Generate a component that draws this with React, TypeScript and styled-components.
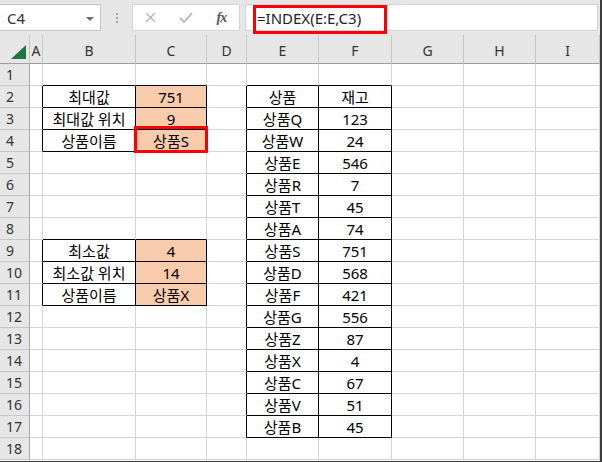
import styled, { createGlobalStyle } from "styled-components";

const GlobalStyle = createGlobalStyle`
  html, body { margin: 0; padding: 0; background: #fff; }
  body { font-family: "Noto Sans", "Noto Sans CJK KR", sans-serif; }
`;

type Range = { c1: number; c2: number; r1: number; r2: number };

const COLUMNS = ["A", "B", "C", "D", "E", "F", "G", "H", "I"];
const ROWS = 18;

const TABLES: Range[] = [
  { c1: 1, c2: 2, r1: 2, r2: 4 },
  { c1: 1, c2: 2, r1: 9, r2: 11 },
  { c1: 4, c2: 5, r1: 2, r2: 17 },
];

const stock: [string, string][] = [
  ["상품", "재고"],
  ["상품Q", "123"],
  ["상품W", "24"],
  ["상품E", "546"],
  ["상품R", "7"],
  ["상품T", "45"],
  ["상품A", "74"],
  ["상품S", "751"],
  ["상품D", "568"],
  ["상품F", "421"],
  ["상품G", "556"],
  ["상품Z", "87"],
  ["상품X", "4"],
  ["상품C", "67"],
  ["상품V", "51"],
  ["상품B", "45"],
];

const values: Record<string, string> = {
  "2-1": "최대값",
  "2-2": "751",
  "3-1": "최대값 위치",
  "3-2": "9",
  "4-1": "상품이름",
  "4-2": "상품S",
  "9-1": "최소값",
  "9-2": "4",
  "10-1": "최소값 위치",
  "10-2": "14",
  "11-1": "상품이름",
  "11-2": "상품X",
};
stock.forEach(([name, qty], i) => {
  values[`${i + 2}-4`] = name;
  values[`${i + 2}-5`] = qty;
});

const filled = (r: number, c: number) =>
  c === 2 && ((r >= 2 && r <= 4) || (r >= 9 && r <= 11));
const bottomDark = (r: number, c: number) =>
  TABLES.some((t) => c >= t.c1 && c <= t.c2 && r >= t.r1 - 1 && r <= t.r2);
const rightDark = (r: number, c: number) =>
  TABLES.some((t) => r >= t.r1 && r <= t.r2 && c >= t.c1 - 1 && c <= t.c2);

const Window = styled.div`
  width: 602px;
  height: 462px;
  box-sizing: border-box;
  overflow: hidden;
  border-right: 2px solid #3c3c3c;
  border-bottom: 1px solid #3c3c3c;
  background: #fff;
`;

const Toolbar = styled.div`
  height: 35px;
  box-sizing: border-box;
  padding-top: 4px;
  background: #e6e6e6;
  display: flex;
  align-items: flex-start;
`;

const NameBox = styled.div`
  width: 101px;
  height: 27px;
  box-sizing: border-box;
  background: #fff;
  border: 1px solid #c6c6c6;
  border-left: none;
  display: flex;
  align-items: center;
  justify-content: space-between;
  padding: 0 6px 0 7px;
  font-size: 15px;
  color: #333;
`;

const DropArrow = styled.span`
  width: 0;
  height: 0;
  border-left: 4px solid transparent;
  border-right: 4px solid transparent;
  border-top: 4px solid #6d6d6d;
  margin-top: 2px;
`;

const Grip = styled.div`
  width: 31px;
  height: 27px;
  display: flex;
  flex-direction: column;
  align-items: center;
  justify-content: center;
  gap: 2px;
`;

const Dot = styled.span`
  width: 2px;
  height: 2px;
  background: #a6a6a6;
`;

const FuncBox = styled.div`
  width: 108px;
  height: 27px;
  box-sizing: border-box;
  background: #fff;
  border: 1px solid #d4d4d4;
  display: flex;
  align-items: center;
`;

const FuncButton = styled.div`
  width: 36px;
  display: flex;
  justify-content: center;
  align-items: center;
`;

const Fx = styled.span`
  font-family: "Liberation Serif", "DejaVu Serif", serif;
  font-style: italic;
  font-weight: bold;
  font-size: 14px;
  color: #555;
  letter-spacing: -1px;
`;

const FormulaBox = styled.div`
  position: relative;
  width: 353px;
  height: 27px;
  margin-left: 5px;
  box-sizing: border-box;
  background: #fff;
  border: 1px solid #d4d4d4;
  display: flex;
  align-items: center;
  padding-left: 11px;
  font-size: 15px;
  color: #222;
`;

const Mark = styled.span<{ $top: number; $left: number; $w: number; $h: number }>`
  position: absolute;
  top: ${(p) => p.$top}px;
  left: ${(p) => p.$left}px;
  width: ${(p) => p.$w}px;
  height: ${(p) => p.$h}px;
  box-sizing: border-box;
  border: 3px solid #f00;
  pointer-events: none;
  z-index: 2;
`;

const Sheet = styled.div`
  display: grid;
  grid-template-columns: 30px 13px 93px 71px 40px 72px 73px 72px 72px 1fr;
  grid-auto-rows: 22px;
  grid-template-rows: 29px;
`;

const Corner = styled.div`
  background: #e6e6e6;
  border-right: 1px solid #c6c6c6;
  border-bottom: 1px solid #9e9e9e;
  box-sizing: border-box;
  display: flex;
  align-items: flex-end;
  justify-content: flex-end;
  padding: 0 3px 4px 0;
`;

const ColHead = styled.div`
  background: #e6e6e6;
  border-right: 1px solid #c6c6c6;
  border-bottom: 1px solid #9e9e9e;
  box-sizing: border-box;
  display: flex;
  align-items: center;
  justify-content: center;
  padding-top: 2px;
  font-size: 14px;
  color: #333;
`;

const RowHead = styled.div`
  background: #e6e6e6;
  border-right: 1px solid #a6a6a6;
  border-bottom: 1px solid #c6c6c6;
  box-sizing: border-box;
  display: flex;
  align-items: center;
  padding-left: 6px;
  font-size: 14px;
  color: #333;
`;

const Cell = styled.div<{ $fill: boolean; $right: boolean; $bottom: boolean }>`
  position: relative;
  box-sizing: border-box;
  background: ${(p) => (p.$fill ? "#f8cbad" : "#fff")};
  border-right: 1px solid ${(p) => (p.$right ? "#000" : "#d4d4d4")};
  border-bottom: 1px solid ${(p) => (p.$bottom ? "#000" : "#d4d4d4")};
  display: flex;
  align-items: center;
  justify-content: center;
  white-space: nowrap;
  font-size: 15px;
  color: #000;
`;

function App() {
  const rows = Array.from({ length: ROWS }, (_, i) => i + 1);
  return (
    <Window>
      <GlobalStyle />
      <Toolbar>
        <NameBox>
          <span>C4</span>
          <DropArrow />
        </NameBox>
        <Grip>
          <Dot />
          <Dot />
          <Dot />
        </Grip>
        <FuncBox>
          <FuncButton>
            <svg width="11" height="11" viewBox="0 0 11 11">
              <path d="M1 1 L10 10 M10 1 L1 10" stroke="#b5b5b5" strokeWidth="1.4" fill="none" />
            </svg>
          </FuncButton>
          <FuncButton>
            <svg width="14" height="11" viewBox="0 0 14 11">
              <path d="M1 6 L5 10 L13 1" stroke="#b5b5b5" strokeWidth="1.8" fill="none" />
            </svg>
          </FuncButton>
          <FuncButton>
            <Fx>fx</Fx>
          </FuncButton>
        </FuncBox>
        <FormulaBox>
          =INDEX(E:E,C3)
          <Mark $top={0} $left={7} $w={134} $h={29} />
        </FormulaBox>
      </Toolbar>
      <Sheet>
        <Corner>
          <svg width="15" height="14" viewBox="0 0 15 14">
            <polygon points="15,0 15,14 0,14" fill="#217346" />
          </svg>
        </Corner>
        {COLUMNS.map((c) => (
          <ColHead key={c}>{c}</ColHead>
        ))}
        {rows.map((r) => [
          <RowHead key={`h${r}`}>{r}</RowHead>,
          ...COLUMNS.map((_, c) => (
            <Cell
              key={`${r}-${c}`}
              $fill={filled(r, c)}
              $right={rightDark(r, c)}
              $bottom={bottomDark(r, c)}
            >
              {values[`${r}-${c}`]}
              {r === 4 && c === 2 && <Mark $top={-4} $left={-2} $w={74} $h={27} />}
            </Cell>
          )),
        ])}
      </Sheet>
    </Window>
  );
}

export default App;
